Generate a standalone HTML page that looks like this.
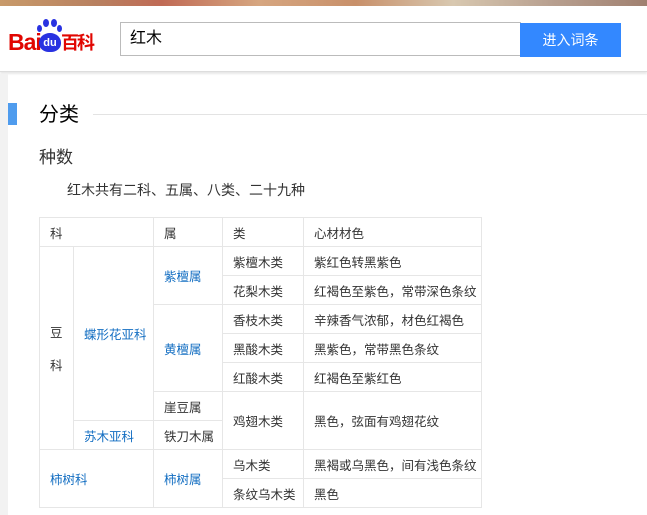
<!DOCTYPE html><html><head><meta charset="utf-8"><style>
*{margin:0;padding:0;box-sizing:border-box}
body{width:647px;height:515px;overflow:hidden;background:#fff;font-family:"Liberation Sans","Noto Sans CJK SC",sans-serif;position:relative;color:#333}
.top{position:absolute;left:0;top:0;width:647px;height:6px;background:linear-gradient(90deg,#c89a6a,#b88060 15%,#c06a55 25%,#d6a680 40%,#c8906a 55%,#d8c8b0 70%,#b8a090 85%,#a08070)}
.hdr{position:absolute;left:0;top:6px;width:647px;height:66px;background:#fff;border-bottom:1px solid #ddd;box-shadow:0 2px 2px #e8e8e8}
.strip{position:absolute;left:0;top:74px;width:8px;height:441px;background:#f2f2f2}
.a{position:absolute}
.link{color:#136ec2}
table{position:absolute;left:39px;top:217px;width:442px;table-layout:fixed;border-collapse:collapse;font-size:12.5px;color:#333;white-space:nowrap}
td{border:1px solid #e6e6e6;height:29px;padding:0 0 0 10px;vertical-align:middle;overflow:hidden}
</style></head><body>
<div class="top"></div>
<div class="hdr">
 <div class="a" style="left:8px;top:24px;font:bold 23px 'Liberation Sans',sans-serif;color:#e10601;letter-spacing:-1px;line-height:24px">Bai</div>
 <div class="a" style="left:39px;top:27px;width:22px;height:19px;border-radius:50% 50% 45% 45%;background:#2932e1;color:#fff;font:bold 11px 'Liberation Sans',sans-serif;text-align:center;line-height:21px">du</div>
 <div class="a" style="left:37px;top:19px;width:5px;height:7px;border-radius:50%;background:#2932e1"></div>
 <div class="a" style="left:43px;top:13px;width:6px;height:8px;border-radius:50%;background:#2932e1"></div>
 <div class="a" style="left:51px;top:13px;width:6px;height:8px;border-radius:50%;background:#2932e1"></div>
 <div class="a" style="left:57px;top:19px;width:5px;height:7px;border-radius:50%;background:#2932e1"></div>
 <div class="a" style="left:61px;top:25px;font:bold 18px 'Noto Sans CJK SC',sans-serif;color:#e10601;letter-spacing:-2px;line-height:22px">百科</div>
 <div class="a" style="left:120px;top:16px;width:401px;height:34px;border:1px solid #bbb;font-size:16px;color:#000;padding:5px 0 0 9px;line-height:22px">红木</div>
 <div class="a" style="left:520px;top:17px;width:101px;height:34px;background:#3388ff;color:#fff;font-size:14px;text-align:center;line-height:34px">进入词条</div>
</div>
<div class="strip"></div>
<div class="a" style="left:8px;top:103px;width:9px;height:22px;background:#4f9cee"></div>
<div class="a" style="left:39px;top:102px;font-size:20px;color:#000;line-height:26px">分类</div>
<div class="a" style="left:93px;top:114px;width:554px;height:1px;background:#e3e3e3"></div>
<div class="a" style="left:39px;top:146px;font-size:17px;color:#333;line-height:24px">种数</div>
<div class="a" style="left:67px;top:180px;font-size:14px;color:#333;line-height:20px">红木共有二科、五属、八类、二十九种</div>
<table>
<colgroup><col style="width:34px"><col style="width:80px"><col style="width:69px"><col style="width:81px"><col style="width:178px"></colgroup>
<tr><td colspan="2">科</td><td>属</td><td>类</td><td>心材材色</td></tr>
<tr><td rowspan="7">豆<br><br>科</td><td rowspan="6" class="link">蝶形花亚科</td><td rowspan="2" class="link">紫檀属</td><td>紫檀木类</td><td>紫红色转黑紫色</td></tr>
<tr><td>花梨木类</td><td>红褐色至紫色，常带深色条纹</td></tr>
<tr><td rowspan="3" class="link">黄檀属</td><td>香枝木类</td><td>辛辣香气浓郁，材色红褐色</td></tr>
<tr><td>黑酸木类</td><td>黑紫色，常带黑色条纹</td></tr>
<tr><td>红酸木类</td><td>红褐色至紫红色</td></tr>
<tr><td>崖豆属</td><td rowspan="2">鸡翅木类</td><td rowspan="2">黑色，弦面有鸡翅花纹</td></tr>
<tr><td class="link">苏木亚科</td><td>铁刀木属</td></tr>
<tr><td colspan="2" rowspan="2" class="link">柿树科</td><td rowspan="2" class="link">柿树属</td><td>乌木类</td><td>黑褐或乌黑色，间有浅色条纹</td></tr>
<tr><td>条纹乌木类</td><td>黑色</td></tr>
</table>
</body></html>
